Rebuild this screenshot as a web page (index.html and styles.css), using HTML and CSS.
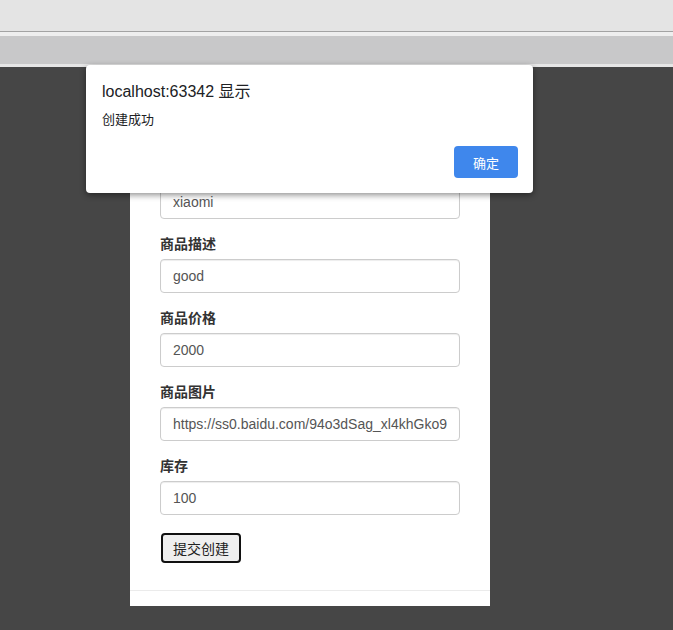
FILE: index.html
```html
<!DOCTYPE html>
<html lang="zh">
<head>
<meta charset="utf-8">
<title>创建商品</title>
<link rel="stylesheet" href="styles.css">
</head>
<body>
<div class="chrome">
  <div class="chrome-top"></div>
  <div class="chrome-line"></div>
  <div class="chrome-gap"></div>
  <div class="chrome-bar"></div>
  <div class="chrome-bottom"></div>
</div>
<div class="stage">
  <div class="card">
    <form class="form">
      <div class="group">
        <label class="label">商品名</label>
        <input class="field" type="text" value="xiaomi">
      </div>
      <div class="group">
        <label class="label">商品描述</label>
        <input class="field" type="text" value="good">
      </div>
      <div class="group">
        <label class="label">商品价格</label>
        <input class="field" type="text" value="2000">
      </div>
      <div class="group">
        <label class="label">商品图片</label>
        <input class="field" type="text" value="https://ss0.baidu.com/94o3dSag_xl4khGko9WTAnF6hhy/image/h%3D300">
      </div>
      <div class="group">
        <label class="label">库存</label>
        <input class="field" type="text" value="100">
      </div>
      <button class="submit" type="button">提交创建</button>
    </form>
    <div class="divider"></div>
  </div>
</div>
<div class="dialog">
  <div class="dialog-title">localhost:63342 显示</div>
  <div class="dialog-msg">创建成功</div>
  <div class="dialog-actions">
    <button class="ok" type="button">确定</button>
  </div>
</div>
</body>
</html>
```
FILE: styles.css
```css
html, body {
  margin: 0;
  padding: 0;
}
body {
  background: #464646;
  font-family: "Liberation Sans", "Noto Sans CJK SC", sans-serif;
  width: 673px;
  height: 630px;
  overflow: hidden;
  position: relative;
}
.chrome {
  display: flex;
  flex-direction: column;
}
.chrome-top {
  height: 31px;
  background: #e4e4e4;
}
.chrome-line {
  height: 1px;
  background: #a3a3a3;
}
.chrome-gap {
  height: 4px;
  background: #eeeeee;
}
.chrome-bar {
  height: 28px;
  background: #c8c8c9;
}
.chrome-bottom {
  height: 3px;
  background: #e6e6e6;
}
.stage {
  padding-left: 130px;
}
.card {
  width: 360px;
  background: #fff;
  padding-top: 93px;
  padding-bottom: 15px;
  box-sizing: border-box;
}
.form {
  padding: 0 30px;
  display: flex;
  flex-direction: column;
}
.group {
  margin-bottom: 15px;
  display: flex;
  flex-direction: column;
}
.label {
  font-family: "Noto Sans CJK SC", sans-serif;
  font-weight: 700;
  font-size: 14px;
  line-height: 18px;
  height: 20px;
  color: #333;
  margin-bottom: 5px;
}
.field {
  box-sizing: border-box;
  width: 300px;
  height: 34px;
  margin: 0;
  padding: 6px 12px;
  border: 1px solid #ccc;
  border-radius: 4px;
  font-family: "Liberation Sans", sans-serif;
  font-size: 14px;
  color: #555;
  background: #fff;
  box-shadow: inset 0 1px 1px rgba(0,0,0,.075);
  outline: none;
}
.submit {
  align-self: flex-start;
  box-sizing: border-box;
  margin: 3px 0 0 1px;
  width: 80px;
  height: 30px;
  padding: 0;
  border: 2px solid #111;
  border-radius: 4px;
  background: #efefef;
  font-family: "Noto Sans CJK SC", sans-serif;
  font-size: 14px;
  color: #222;
}
.divider {
  margin-top: 27px;
  height: 1px;
  background: #ebebeb;
}
.dialog {
  position: absolute;
  left: 86px;
  top: 65px;
  width: 447px;
  height: 128px;
  box-sizing: border-box;
  background: #fff;
  border-radius: 4px;
  box-shadow: 0 2px 6px rgba(0,0,0,.45);
  padding: 16px 15px 0 16px;
  display: flex;
  flex-direction: column;
}
.dialog-title {
  font-family: "Liberation Sans", "Noto Sans CJK SC", sans-serif;
  font-size: 16px;
  line-height: 22px;
  color: #202124;
}
.dialog-msg {
  margin-top: 7px;
  font-family: "Noto Sans CJK SC", sans-serif;
  font-size: 13px;
  line-height: 18px;
  color: #202124;
}
.dialog-actions {
  display: flex;
  justify-content: flex-end;
  margin-top: 18px;
}
.ok {
  width: 64px;
  height: 32px;
  border: 0;
  border-radius: 4px;
  background: #3f87ec;
  color: #fff;
  font-family: "Noto Sans CJK SC", sans-serif;
  font-size: 13px;
  padding: 0;
}
```
